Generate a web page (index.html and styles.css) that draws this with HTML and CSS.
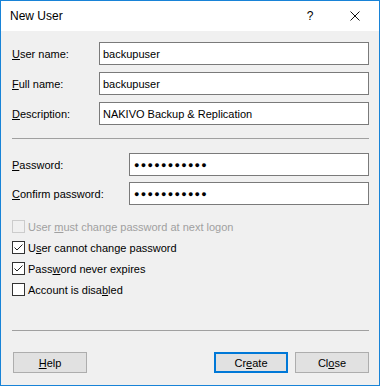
FILE: index.html
```html
<!DOCTYPE html>
<html lang="en">
<head>
    <meta charset="UTF-8">
    <title>New User</title>
    <link rel="stylesheet" href="styles.css">
</head>
<body>
    <div class="window">
        <div class="titlebar">
            <span class="title">New User</span>
            <span class="tb-help">?</span>
            <span class="tb-close">
                <svg width="10" height="10" viewBox="0 0 10 10"><path d="M0.5 0.5 L9.5 9.5 M9.5 0.5 L0.5 9.5" stroke="#111" stroke-width="1" fill="none"/></svg>
            </span>
        </div>

        <div class="content">
            <div class="group names">
                <div class="row">
                    <label><u>U</u>ser name:</label>
                    <div class="field">backupuser</div>
                </div>
                <div class="row">
                    <label><u>F</u>ull name:</label>
                    <div class="field">backupuser</div>
                </div>
                <div class="row">
                    <label><u>D</u>escription:</label>
                    <div class="field">NAKIVO Backup &amp; Replication</div>
                </div>
            </div>

            <div class="sep"></div>

            <div class="group passwords">
                <div class="row">
                    <label><u>P</u>assword:</label>
                    <div class="field dots">●●●●●●●●●●●</div>
                </div>
                <div class="row">
                    <label><u>C</u>onfirm password:</label>
                    <div class="field dots">●●●●●●●●●●●</div>
                </div>
            </div>

            <div class="checks">
                <div class="check disabled">
                    <span class="box"></span>
                    <span>User <u>m</u>ust change password at next logon</span>
                </div>
                <div class="check">
                    <span class="box">
                        <svg width="11" height="11" viewBox="0 0 11 11"><path d="M1.5 5.5 L4 8 L9.5 2.5" stroke="#222" stroke-width="1" fill="none"/></svg>
                    </span>
                    <span>U<u>s</u>er cannot change password</span>
                </div>
                <div class="check">
                    <span class="box">
                        <svg width="11" height="11" viewBox="0 0 11 11"><path d="M1.5 5.5 L4 8 L9.5 2.5" stroke="#222" stroke-width="1" fill="none"/></svg>
                    </span>
                    <span>Pass<u>w</u>ord never expires</span>
                </div>
                <div class="check">
                    <span class="box"></span>
                    <span>Account is disa<u>b</u>led</span>
                </div>
            </div>

            <div class="sep bottom"></div>

            <div class="buttons">
                <button class="btn help"><u>H</u>elp</button>
                <span class="spacer"></span>
                <button class="btn default">Cr<u>e</u>ate</button>
                <button class="btn">Cl<u>o</u>se</button>
            </div>
        </div>
    </div>
</body>
</html>
```

FILE: styles.css
```css
* {
    margin: 0;
    padding: 0;
    box-sizing: border-box;
}

body {
    font-family: 'Liberation Sans', Arial, sans-serif;
    font-size: 11px;
    color: #000;
    background: #fff;
}

u {
    text-decoration: underline;
    text-underline-offset: 1px;
}

.window {
    width: 380px;
    height: 386px;
    border: 1px solid #1883d7;
    background: #f0f0f0;
    display: flex;
    flex-direction: column;
}

/* Title bar */
.titlebar {
    height: 30px;
    background: #fff;
    display: flex;
    align-items: center;
}

.title {
    font-size: 12px;
    padding-left: 9px;
    flex: 1;
}

.tb-help {
    font-size: 12px;
    width: 46px;
    text-align: center;
    margin-right: -1px;
}

.tb-close {
    width: 46px;
    display: flex;
    justify-content: center;
    margin-right: 1px;
}

/* Body */
.content {
    flex: 1;
    padding: 11px 10px 0 11px;
}

.row {
    display: flex;
    align-items: center;
}

.row + .row {
    margin-top: 7px;
}

.passwords .row + .row {
    margin-top: 6px;
}

.row label {
    flex: 0 0 87px;
}

.passwords .row label {
    flex-basis: 117px;
}

.field {
    flex: 1;
    height: 23px;
    background: #fff;
    border: 1px solid #7a7a7a;
    padding: 0 0 0 3px;
    display: flex;
    align-items: center;
    white-space: nowrap;
    overflow: hidden;
}

.field.dots {
    font-size: 9px;
    letter-spacing: 1.3px;
    padding-left: 4px;
}

.sep {
    height: 1px;
    background: #a0a0a0;
    margin: 13px 0 14px;
}

.sep.bottom {
    margin: 34px 0 21px;
}

/* Checkboxes */
.checks {
    margin-top: 15px;
}

.check {
    display: flex;
    align-items: center;
    height: 13px;
    gap: 3px;
}

.check + .check {
    margin-top: 8px;
}

.box {
    width: 13px;
    height: 13px;
    border: 1px solid #333;
    background: #fff;
    display: flex;
    align-items: center;
    justify-content: center;
}

.check.disabled {
    color: #a0a0a0;
}

.check.disabled .box {
    border-color: #cccccc;
    background: #f0f0f0;
}

/* Buttons */
.buttons {
    display: flex;
    gap: 7px;
}

.spacer {
    flex: 1;
}

.btn {
    width: 74px;
    height: 21px;
    font-family: inherit;
    font-size: 11px;
    color: #000;
    background: #e1e1e1;
    border: 1px solid #adadad;
}

.btn.help {
    margin-left: 1px;
}

.btn.default {
    border: 2px solid #0078d7;
}
```
